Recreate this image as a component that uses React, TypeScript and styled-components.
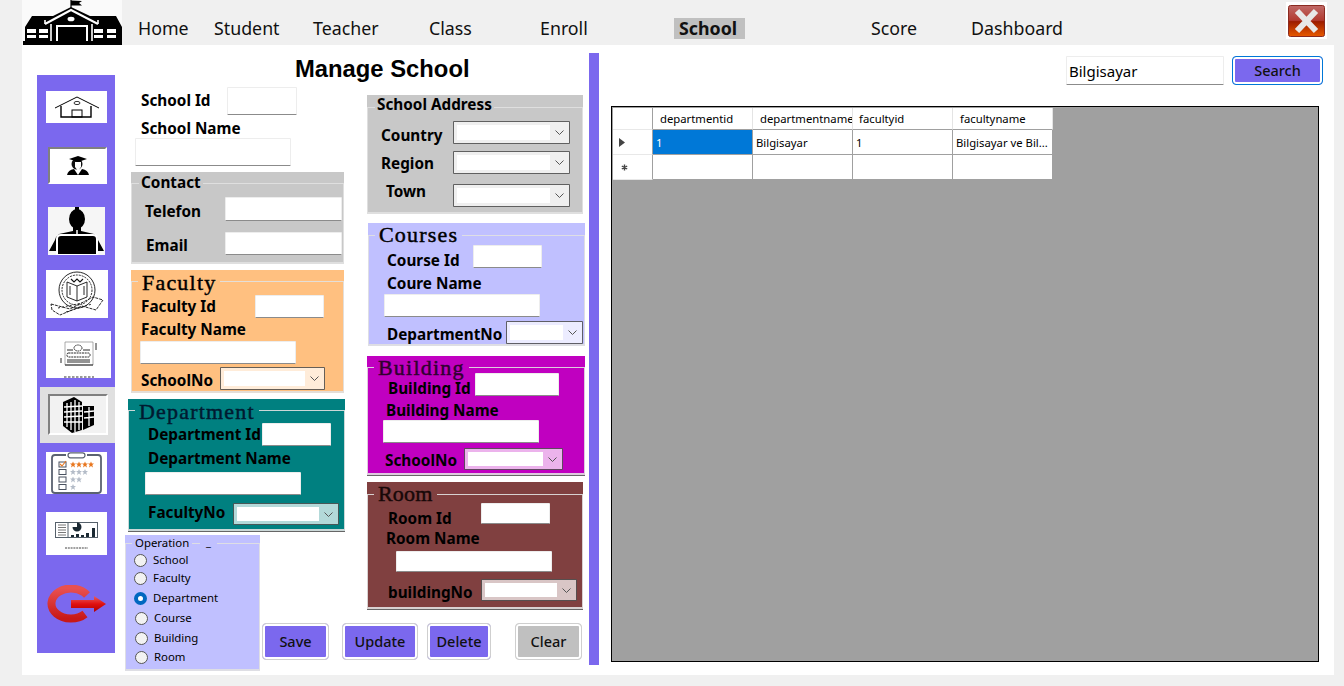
import React from "react";
import styled, { createGlobalStyle } from "styled-components";

const Global = createGlobalStyle`
  html, body { margin: 0; padding: 0; background: #f0f0f0; overflow: hidden; }
  body { font-family: "Noto Sans", "Open Sans", sans-serif; color: #000; }
  * { box-sizing: border-box; }
`;

const Page = styled.div`
  width: 1344px;
  height: 686px;
  display: flex;
  flex-direction: column;
`;

const TopBar = styled.header`
  height: 45px;
  display: flex;
  align-items: stretch;
  padding-left: 22px;
`;

const Logo = styled.div`
  width: 100px;
  height: 45px;
  background: #fafafa;
  margin-right: 16px;
  svg { display: block; }
`;

const Nav = styled.nav`
  display: flex;
  align-items: center;
  padding-top: 11px;
`;

const NavItem = styled.div<{ $w: number }>`
  width: ${(p) => p.$w}px;
  font-size: 17.8px;
  line-height: 22px;
  color: #111;
  white-space: nowrap;
`;

const NavActive = styled.span`
  display: inline-block;
  width: 71px;
  height: 21px;
  line-height: 21px;
  padding-left: 5px;
  background: #c0c0c0;
  font-weight: 700;
`;

const CloseButton = styled.button`
  margin: 2px 17px 0 auto;
  width: 41px;
  height: 37px;
  padding: 3px 2px;
  border: 0;
  background: #fff;
  svg { display: block; }
`;

const Panel = styled.main`
  width: 1312px;
  height: 630px;
  margin-left: 22px;
  background: #fff;
  display: flex;
  align-items: flex-start;
  padding: 8px 0 0 15px;
`;

const Sidebar = styled.aside`
  width: 78px;
  height: 578px;
  margin: 22px 10px 0 0;
  background: #7b68ee;
  flex-shrink: 0;
`;

const Tile = styled.div<{ $w: number; $h: number; $mt: number; $ml: number; $inset?: boolean; $bg?: string }>`
  width: ${(p) => p.$w}px;
  height: ${(p) => p.$h}px;
  margin: ${(p) => p.$mt}px 0 0 ${(p) => p.$ml}px;
  background: ${(p) => p.$bg ?? "#fff"};
  ${(p) => p.$inset && "border: 2px solid; border-color: #808080 #fff #fff #808080;"}
  svg { display: block; width: 100%; height: 100%; }
`;

const ActiveSlot = styled.div`
  height: 56px;
  margin: 9px 0 0 3px;
  padding-top: 7px;
  background: #e0e0e0;
`;

const FormGrid = styled.section`
  width: 464px;
  height: 618px;
  flex-shrink: 0;
  display: grid;
  grid-template-columns: 135px 85px 244px;
  grid-template-rows: 34px 448px 88px 48px;
  grid-template-areas:
    "title title title"
    "left left right"
    "op . right"
    "op act act";
`;

const Title = styled.h1`
  grid-area: title;
  margin: 0;
  padding-left: 170px;
  font: 700 23.8px/32px "Liberation Sans", Arial, sans-serif;
  white-space: nowrap;
`;

const LeftStack = styled.div`
  grid-area: left;
`;

const RightStack = styled.div`
  grid-area: right;
  padding: 8px 0 0 22px;
`;

const Row = styled.div<{ $h?: number; $mt?: number; $pl?: number }>`
  display: flex;
  align-items: center;
  height: ${(p) => p.$h ?? 23}px;
  margin-top: ${(p) => p.$mt ?? 0}px;
  padding-left: ${(p) => p.$pl ?? 0}px;
`;

const Label = styled.label<{ $w?: number; $dy?: number }>`
  ${(p) => p.$w && `width: ${p.$w}px;`}
  flex-shrink: 0;
  font-size: 15.3px;
  line-height: 20px;
  font-weight: 700;
  white-space: nowrap;
  color: #000;
  position: relative;
  top: ${(p) => p.$dy ?? 0}px;
`;

const Field = styled.input<{ $w: number }>`
  width: ${(p) => p.$w}px;
  height: 100%;
  flex-shrink: 0;
  padding: 0 2px;
  background: #fff;
  border: 1px solid rgba(0, 0, 0, 0.07);
  border-bottom-color: rgba(0, 0, 0, 0.45);
  border-radius: 1px;
  font: 15px "Noto Sans", sans-serif;
  outline: none;
`;

const Combo = styled.div<{ $w: number }>`
  width: ${(p) => p.$w}px;
  height: 100%;
  flex-shrink: 0;
  display: flex;
  align-items: stretch;
  padding: 3px 0 3px 3px;
  background: rgba(255, 255, 255, 0.7);
  border: 1px solid rgba(0, 0, 0, 0.6);
  border-radius: 1px;
`;

const ComboText = styled.div`
  flex: 1;
  background: #fff;
`;

const ComboArrow = styled.div`
  width: 19px;
  display: flex;
  align-items: center;
  justify-content: center;
`;

const Group = styled.div<{ $w: number; $h: number; $mt?: number; $ml?: number; $bg: string; $under?: boolean }>`
  width: ${(p) => p.$w}px;
  height: ${(p) => p.$h}px;
  margin: ${(p) => p.$mt ?? 0}px 0 0 ${(p) => p.$ml ?? 0}px;
  background: ${(p) => p.$bg};
  ${(p) => p.$under && "box-shadow: 0 1px 0 #666;"}
`;

const Frame = styled.fieldset`
  height: 100%;
  min-width: 0;
  margin: 0;
  padding: 0;
  border: 1px solid rgba(225, 225, 225, 0.9);
  border-bottom-width: 2px;
`;

const BoldLegend = styled.legend<{ $lh?: number; $dy: number }>`
  margin-left: 7px;
  padding: 0 2px;
  font-size: 15.3px;
  font-weight: 700;
  line-height: ${(p) => p.$lh ?? 22}px;
  position: relative;
  top: ${(p) => p.$dy}px;
`;

const SerifLegend = styled.legend<{ $lh?: number; $ink?: string; $dy?: number; $ls?: number }>`
  margin-left: 6px;
  padding: 0 4px;
  font: 400 22px "Liberation Serif", "Times New Roman", serif;
  line-height: ${(p) => p.$lh ?? 22}px;
  letter-spacing: ${(p) => p.$ls ?? 1.2}px;
  color: ${(p) => p.$ink ?? "#000"};
  -webkit-text-stroke: 0.45px currentColor;
  position: relative;
  top: ${(p) => p.$dy ?? 0}px;
`;

const OperationBox = styled(Group)`
  grid-area: op;
  position: relative;
`;

const OpLegend = styled.legend`
  margin-left: 6px;
  padding: 0 3px;
  font-size: 11.4px;
  line-height: 16px;
`;

const OpMark = styled.span`
  position: absolute;
  left: 75px;
  top: 0;
  width: 17px;
  height: 16px;
  background: #c0c0ff;
  font-size: 11px;
  line-height: 13px;
  text-align: center;
`;

const RadioRow = styled.label<{ $mt: number; $pl: number }>`
  display: flex;
  align-items: center;
  height: 16px;
  margin-top: ${(p) => p.$mt}px;
  padding-left: ${(p) => p.$pl}px;
  font-size: 11.4px;
  line-height: 16px;
`;

const Radio = styled.input`
  appearance: none;
  width: 13px;
  height: 13px;
  margin: 0 6px 0 0;
  border: 1px solid #555;
  border-radius: 50%;
  background: #f2f2f2;
  &:checked {
    border: 4px solid #0067c0;
    background: #fff;
  }
`;

const Actions = styled.div`
  grid-area: act;
  display: flex;
  align-items: flex-start;
  padding-left: 2px;
`;

const Action = styled.button<{ $w: number; $ml?: number; $bg?: string }>`
  width: ${(p) => p.$w}px;
  height: 37px;
  margin-left: ${(p) => p.$ml ?? 0}px;
  padding: 0 0 2px;
  border: 1px solid #cfcfcf;
  border-radius: 4px;
  box-shadow: inset 0 0 0 2px #fff;
  background: ${(p) => p.$bg ?? "#7b68ee"};
  font: 500 14.5px "Noto Sans", sans-serif;
  color: #111;
`;

const Divider = styled.div`
  width: 10px;
  height: 612px;
  flex-shrink: 0;
  background: #7b68ee;
`;

const RightPane = styled.section`
  width: 735px;
  padding-left: 12px;
`;

const SearchRow = styled.div`
  display: flex;
  justify-content: flex-end;
  height: 29px;
  margin-top: 3px;
  padding-right: 11px;
`;

const SearchInput = styled(Field)`
  height: 29px;
  margin-right: 8px;
  padding: 0 2px;
  font-size: 15px;
`;

const SearchButton = styled.button`
  width: 91px;
  height: 29px;
  padding: 0 0 2px;
  border: 1px solid #0078d7;
  border-radius: 4px;
  box-shadow: inset 0 0 0 2px #fff;
  background: #7b68ee;
  font: 500 14.5px "Noto Sans", sans-serif;
  color: #111;
`;

const DataArea = styled.div`
  width: 708px;
  height: 556px;
  margin-top: 21px;
  padding: 1px;
  background: #a0a0a0;
  border: 1px solid #000;
`;

const Table = styled.table`
  width: 440px;
  table-layout: fixed;
  border-collapse: separate;
  border-spacing: 0;
  font-size: 11.3px;
  line-height: 16px;
`;

const Corner = styled.th`
  width: 40px;
  height: 22px;
  padding: 0;
  background: #fff;
  border-right: 1px solid #a0a0a0;
  border-bottom: 1px solid #e8e8e8;
`;

const Head = styled.th<{ $pl: number }>`
  height: 22px;
  padding: 1px 0 0 ${(p) => p.$pl}px;
  background: #fff;
  border-right: 1px solid #e4e4e4;
  border-bottom: 1px solid #a0a0a0;
  font-weight: 400;
  text-align: left;
  white-space: nowrap;
  overflow: hidden;
`;

const RowHead = styled.th`
  height: 25px;
  padding: 0;
  background: #fff;
  border-right: 1px solid #a0a0a0;
  border-bottom: 1px solid #e8e8e8;
  font-weight: 400;
  svg { display: block; margin-left: 6px; }
`;

const Cell = styled.td<{ $sel?: boolean }>`
  height: 25px;
  padding: 1px 0 0 3px;
  background: ${(p) => (p.$sel ? "#0078d7" : "#fff")};
  color: ${(p) => (p.$sel ? "#fff" : "#000")};
  border-right: 1px solid #a0a0a0;
  border-bottom: 1px solid #a0a0a0;
  white-space: nowrap;
  overflow: hidden;
`;

const Chevron = () => (
  <svg width="9" height="5" viewBox="0 0 9 5">
    <path d="M0.5 0.5 L4.5 4.5 L8.5 0.5" fill="none" stroke="#555" strokeWidth="1" />
  </svg>
);

const Select = ({ w }: { w: number }) => (
  <Combo $w={w}>
    <ComboText />
    <ComboArrow>
      <Chevron />
    </ComboArrow>
  </Combo>
);

const SchoolLogo = () => (
  <svg width="100" height="45" viewBox="0 0 100 45">
    <path d="M49 0V9" stroke="#000" strokeWidth="1.2" />
    <path d="M49 0.5L60 1L57 3L60 5.5H49Z" fill="#000" />
    <path d="M1 45V41H3V27L10 16H31L49 7L68 16H94L100 27V41V45Z" fill="#000" />
    <path d="M23 24L49 10L76 24" fill="none" stroke="#fff" strokeWidth="2" />
    <path d="M23 24V20M76 24V20" stroke="#fff" strokeWidth="1.6" />
    <ellipse cx="49" cy="19" rx="3.5" ry="2.3" fill="#fff" />
    <path d="M35 41V26H65V41" fill="none" stroke="#fff" strokeWidth="2" />
    <path d="M29 41V24M70 41V24" stroke="#fff" strokeWidth="1.6" />
    <g fill="#fff">
      <rect x="5" y="29" width="9" height="4" />
      <rect x="17" y="29" width="9" height="4" />
      <rect x="5" y="35" width="9" height="3" />
      <rect x="17" y="35" width="9" height="3" />
      <rect x="72" y="29" width="9" height="4" />
      <rect x="85" y="29" width="9" height="4" />
      <rect x="72" y="35" width="9" height="3" />
      <rect x="85" y="35" width="9" height="3" />
    </g>
  </svg>
);

const CloseIcon = () => (
  <svg width="37" height="32" viewBox="0 0 37 32">
    <defs>
      <linearGradient id="closeFill" x1="0" y1="0" x2="0" y2="1">
        <stop offset="0" stopColor="#c06a68" />
        <stop offset="0.48" stopColor="#b23a30" />
        <stop offset="0.52" stopColor="#9c1c00" />
        <stop offset="1" stopColor="#e85a00" />
      </linearGradient>
    </defs>
    <rect x="0.5" y="0.5" width="36" height="31" rx="2" fill="url(#closeFill)" stroke="#8a2a20" />
    <path d="M9 6L28 26M28 6L9 26" stroke="#e8e8e8" strokeWidth="6" />
  </svg>
);

const HouseIcon = () => (
  <svg viewBox="0 0 61 32">
    <g fill="none" stroke="#000">
      <path d="M9 17L31 6L53 17" strokeWidth="1" />
      <path d="M15 15V26H45V15" strokeWidth="1.4" />
      <rect x="26" y="19" width="10" height="7" strokeWidth="1" />
      <ellipse cx="31" cy="12" rx="3" ry="1.6" strokeWidth="0.8" />
    </g>
  </svg>
);

const GraduateIcon = () => (
  <svg viewBox="0 0 55 33">
    <path d="M17 26Q18 21 24 20L28 26L32 20Q38 21 39 26Z" fill="#000" />
    <circle cx="27" cy="15" r="5.5" fill="#111" />
    <path d="M25 13H31V18L28 22L25 18Z" fill="#fff" />
    <path d="M19 10L28 7L37 10L28 13Z" fill="#000" />
  </svg>
);

const PersonIcon = () => (
  <svg viewBox="0 0 57 48">
    <ellipse cx="29" cy="12" rx="8" ry="10" fill="#000" />
    <path d="M27 0H31V4H27Z" fill="#000" />
    <path d="M25 19H33V24L46 27Q49 29 50 33L56 44H1L7 33Q8 29 11 27L25 24Z" fill="#000" />
    <path d="M9 48V32Q9 28 13 28H45Q49 28 49 32V48Z" fill="#000" stroke="#fff" strokeWidth="2" />
    <path d="M29 23V28" stroke="#fff" strokeWidth="1.5" />
  </svg>
);

const EmblemIcon = () => (
  <svg viewBox="0 0 62 48">
    <g fill="none" stroke="#111" strokeWidth="0.9">
      <circle cx="31" cy="20" r="18" />
      <circle cx="31" cy="20" r="15" strokeDasharray="2 1" />
      <path d="M21 12L31 16L41 12V27L31 31L21 27Z" />
      <path d="M31 16V31M24 16V25M38 16V25" />
      <path d="M25 9L28 12L31 9L34 12L37 9" strokeWidth="1.1" />
      <path d="M5 34L24 39L47 27L57 30L50 40L36 36L14 45L6 40Z" strokeDasharray="3 1" />
      <path d="M12 38L36 33M20 42L46 34" strokeDasharray="2 2" />
    </g>
  </svg>
);

const CertificateIcon = () => (
  <svg viewBox="0 0 65 47">
    <g fill="none" stroke="#111" strokeWidth="0.9">
      <path d="M19 34V11H47V34Z" strokeWidth="0.7" stroke="#888" />
      <ellipse cx="32" cy="17" rx="4" ry="3" strokeDasharray="1.5 0.7" />
      <rect x="21" y="22" width="23" height="4" rx="1.5" strokeDasharray="2 0.7" />
      <path d="M21 19H27M37 19H44M21 29H44M21 31H44M19 34H47" />
      <path d="M50 12V19M15 27V32" />
    </g>
    <path d="M18 46H48" stroke="#333" strokeWidth="1.2" strokeDasharray="2.5 1.5" />
  </svg>
);

const BuildingIcon = () => (
  <svg viewBox="0 0 56 37">
    <path d="M13 6L24 1L32 6V34L22 37L13 30Z" fill="#000" />
    <path d="M33 10L44 10V29L33 34Z" fill="#000" />
    <g stroke="#fff" strokeWidth="1.3" fill="none">
      <path d="M14 11L32 10M14 16L32 15M14 21L32 20M14 26L32 26" />
      <path d="M17 7V31M21 6V34M25 4V36M29 6V34" />
      <path d="M34 16L44 15M34 22L44 21M39 11V30" />
    </g>
  </svg>
);

const Star = ({ x, y, c }: { x: number; y: number; c: string }) => (
  <polygon
    fill={c}
    points={`${x},${y - 3} ${x + 0.9},${y - 0.9} ${x + 3},${y - 0.9} ${x + 1.3},${y + 0.6} ${x + 2},${y + 3} ${x},${y + 1.6} ${x - 2},${y + 3} ${x - 1.3},${y + 0.6} ${x - 3},${y - 0.9} ${x - 0.9},${y - 0.9}`}
  />
);

const ScoreIcon = () => (
  <svg viewBox="0 0 61 42">
    <path d="M20 3H9Q6 3 6 6V38Q6 41 9 41H52Q55 41 55 38V6Q55 3 52 3H41" fill="none" stroke="#5a6270" strokeWidth="1.8" />
    <rect x="22" y="0.8" width="17" height="5" rx="2.5" fill="#fff" stroke="#5a6270" strokeWidth="1.2" />
    <g fill="none" stroke="#4a5260" strokeWidth="1">
      <rect x="13" y="10" width="7" height="5" />
      <rect x="13" y="17.5" width="7" height="5" />
      <rect x="13" y="25" width="7" height="5" />
      <rect x="13" y="32.5" width="7" height="5" />
    </g>
    <path d="M14 12L16 14L20 9" fill="none" stroke="#e8761e" strokeWidth="1.1" />
    {[27, 33, 39, 45].map((x) => <Star key={x} x={x} y={12.5} c="#e8761e" />)}
    {[27, 33, 39].map((x) => <Star key={x} x={x} y={20} c="#b4bcc8" />)}
    {[27, 33].map((x) => <Star key={x} x={x} y={27.5} c="#b4bcc8" />)}
    <Star x={27} y={35} c="#b4bcc8" />
  </svg>
);

const DashboardIcon = () => (
  <svg viewBox="0 0 61 43">
    <rect x="9.5" y="10.5" width="42" height="15" fill="none" stroke="#55606a" strokeWidth="1" />
    <path d="M22 10V26" stroke="#55606a" strokeWidth="1" />
    <path d="M12 13H20M12 15.5H20M12 18H20M12 20.5H20M12 23H20" stroke="#777" strokeWidth="1" />
    <path d="M31 15V10.5A4.5 4.5 0 1 1 26.5 15Z" fill="#1c2a33" />
    <path d="M25 23h3v2h-3zM30 22h3v3h-3zM35 23h3v2h-3zM40 21h3v4h-3zM46 16h3v9h-3z" fill="#1c2a33" />
    <path d="M19 36H42" stroke="#444" strokeWidth="1.2" strokeDasharray="2 0.8" />
  </svg>
);

const ExitIcon = () => (
  <svg viewBox="0 0 62 40">
    <defs>
      <linearGradient id="ringFill" x1="0" y1="0" x2="0" y2="1">
        <stop offset="0" stopColor="#e85050" />
        <stop offset="1" stopColor="#c81818" />
      </linearGradient>
      <linearGradient id="arrowFill" x1="0" y1="0" x2="0" y2="1">
        <stop offset="0" stopColor="#e86060" />
        <stop offset="0.5" stopColor="#e01010" />
        <stop offset="1" stopColor="#b00000" />
      </linearGradient>
    </defs>
    <path d="M42 10A19.5 15 0 1 0 40 29" fill="none" stroke="url(#ringFill)" strokeWidth="8" />
    <polygon points="26,15 49,15 49,11 61,19 49,27 49,23 26,23" fill="url(#arrowFill)" />
  </svg>
);

const ExitTile = styled(Tile)`
  background: transparent;
`;

export default function App() {
  return (
    <Page>
      <Global />
      <TopBar>
        <Logo>
          <SchoolLogo />
        </Logo>
        <Nav>
          <NavItem $w={76}>Home</NavItem>
          <NavItem $w={99}>Student</NavItem>
          <NavItem $w={116}>Teacher</NavItem>
          <NavItem $w={111}>Class</NavItem>
          <NavItem $w={134}>Enroll</NavItem>
          <NavItem $w={197}>
            <NavActive>School</NavActive>
          </NavItem>
          <NavItem $w={100}>Score</NavItem>
          <NavItem $w={100}>Dashboard</NavItem>
        </Nav>
        <CloseButton aria-label="Close">
          <CloseIcon />
        </CloseButton>
      </TopBar>

      <Panel>
        <Sidebar>
          <Tile $w={61} $h={32} $mt={16} $ml={9}><HouseIcon /></Tile>
          <Tile $w={59} $h={37} $mt={24} $ml={11} $inset><GraduateIcon /></Tile>
          <Tile $w={57} $h={48} $mt={23} $ml={11} $bg="#f6f6f6"><PersonIcon /></Tile>
          <Tile $w={62} $h={48} $mt={15} $ml={9}><EmblemIcon /></Tile>
          <Tile $w={65} $h={47} $mt={13} $ml={9}><CertificateIcon /></Tile>
          <ActiveSlot>
            <Tile $w={60} $h={41} $mt={0} $ml={8} $inset $bg="#f2f2f2"><BuildingIcon /></Tile>
          </ActiveSlot>
          <Tile $w={61} $h={42} $mt={9} $ml={9}><ScoreIcon /></Tile>
          <Tile $w={61} $h={43} $mt={18} $ml={9}><DashboardIcon /></Tile>
          <ExitTile $w={62} $h={40} $mt={30} $ml={8}><ExitIcon /></ExitTile>
        </Sidebar>

        <FormGrid>
          <Title>Manage School</Title>

          <LeftStack>
            <Row $h={28} $pl={16}>
              <Label $w={86} $dy={-1}>School Id</Label>
              <Field $w={70} readOnly />
            </Row>
            <Row $h={20} $mt={3} $pl={16}>
              <Label>School Name</Label>
            </Row>
            <Row $h={28} $pl={10}>
              <Field $w={156} readOnly />
            </Row>

            <Group $w={213} $h={92} $mt={6} $ml={6} $bg="#c8c8c8">
              <Frame>
                <BoldLegend $dy={-1}>Contact</BoldLegend>
                <Row $h={24} $mt={3} $pl={13}>
                  <Label $w={80} $dy={2}>Telefon</Label>
                  <Field $w={117} readOnly />
                </Row>
                <Row $h={23} $mt={11} $pl={14}>
                  <Label $w={79} $dy={1}>Email</Label>
                  <Field $w={117} readOnly />
                </Row>
              </Frame>
            </Group>

            <Group $w={213} $h={123} $mt={6} $ml={6} $bg="#ffc080">
              <Frame>
                <SerifLegend $dy={2}>Faculty</SerifLegend>
                <Row $mt={3} $pl={9}>
                  <Label $w={114} $dy={-1}>Faculty Id</Label>
                  <Field $w={69} readOnly />
                </Row>
                <Row $h={20} $mt={1} $pl={9}>
                  <Label>Faculty Name</Label>
                </Row>
                <Row $mt={2} $pl={8}>
                  <Field $w={156} readOnly />
                </Row>
                <Row $mt={3} $pl={9}>
                  <Label $w={79} $dy={1}>SchoolNo</Label>
                  <Select w={105} />
                </Row>
              </Frame>
            </Group>

            <Group $w={217} $h={132} $mt={6} $ml={3} $bg="#008080" $under>
              <Frame>
                <SerifLegend $ink="#001a30" $dy={2}>Department</SerifLegend>
                <Row $mt={2} $pl={19}>
                  <Label $w={114} $dy={-1}>Department Id</Label>
                  <Field $w={69} readOnly />
                </Row>
                <Row $h={20} $mt={2} $pl={19}>
                  <Label>Department Name</Label>
                </Row>
                <Row $mt={4} $pl={16}>
                  <Field $w={156} readOnly />
                </Row>
                <Row $h={22} $mt={8} $pl={19}>
                  <Label $w={85} $dy={-2}>FacultyNo</Label>
                  <Select w={106} />
                </Row>
              </Frame>
            </Group>
          </LeftStack>

          <RightStack>
            <Group $w={216} $h={119} $bg="#c8c8c8">
              <Frame>
                <BoldLegend $lh={24} $dy={-3}>School Address</BoldLegend>
                <Row $mt={2} $pl={13}>
                  <Label $w={72} $dy={2}>Country</Label>
                  <Select w={117} />
                </Row>
                <Row $mt={7} $pl={13}>
                  <Label $w={72}>Region</Label>
                  <Select w={117} />
                </Row>
                <Row $mt={10} $pl={18}>
                  <Label $w={67} $dy={-5}>Town</Label>
                  <Select w={117} />
                </Row>
              </Frame>
            </Group>

            <Group $w={217} $h={123} $mt={9} $ml={1} $bg="#c0c0ff">
              <Frame>
                <SerifLegend $lh={24}>Courses</SerifLegend>
                <Row $mt={-2} $pl={18}>
                  <Label $w={86} $dy={3}>Course Id</Label>
                  <Field $w={69} readOnly />
                </Row>
                <Row $h={20} $mt={5} $pl={18}>
                  <Label>Coure Name</Label>
                </Row>
                <Row $mt={1} $pl={15}>
                  <Field $w={156} readOnly />
                </Row>
                <Row $mt={4} $pl={18}>
                  <Label $w={119} $dy={1}>DepartmentNo</Label>
                  <Select w={77} />
                </Row>
              </Frame>
            </Group>

            <Group $w={218} $h={119} $mt={10} $bg="#c000c0" $under>
              <Frame>
                <SerifLegend $ink="#300030" $dy={1}>Building</SerifLegend>
                <Row $mt={-5} $pl={20}>
                  <Label $w={87} $dy={3}>Building Id</Label>
                  <Field $w={84} readOnly />
                </Row>
                <Row $h={20} $mt={4} $pl={18}>
                  <Label>Building Name</Label>
                </Row>
                <Row $pl={15}>
                  <Field $w={156} readOnly />
                </Row>
                <Row $h={22} $mt={5} $pl={17}>
                  <Label $w={79} $dy={1}>SchoolNo</Label>
                  <Select w={99} />
                </Row>
              </Frame>
            </Group>

            <Group $w={216} $h={127} $mt={7} $bg="#804040" $under>
              <Frame>
                <SerifLegend $lh={24} $ink="#180808" $ls={0.2}>Room</SerifLegend>
                <Row $h={21} $mt={-3} $pl={20}>
                  <Label $w={93} $dy={4}>Room Id</Label>
                  <Field $w={69} readOnly />
                </Row>
                <Row $h={20} $mt={4} $pl={18}>
                  <Label>Room Name</Label>
                </Row>
                <Row $h={21} $mt={3} $pl={28}>
                  <Field $w={156} readOnly />
                </Row>
                <Row $h={22} $mt={7} $pl={20}>
                  <Label $w={93} $dy={2}>buildingNo</Label>
                  <Select w={96} />
                </Row>
              </Frame>
            </Group>
          </RightStack>

          <OperationBox $w={135} $h={136} $bg="#c0c0ff">
            <Frame>
              <OpLegend>Operation</OpLegend>
              <OpMark>_</OpMark>
              <RadioRow $mt={1} $pl={8}><Radio type="radio" name="op" readOnly />School</RadioRow>
              <RadioRow $mt={2} $pl={8}><Radio type="radio" name="op" readOnly />Faculty</RadioRow>
              <RadioRow $mt={4} $pl={8}><Radio type="radio" name="op" defaultChecked />Department</RadioRow>
              <RadioRow $mt={4} $pl={9}><Radio type="radio" name="op" readOnly />Course</RadioRow>
              <RadioRow $mt={4} $pl={9}><Radio type="radio" name="op" readOnly />Building</RadioRow>
              <RadioRow $mt={3} $pl={9}><Radio type="radio" name="op" readOnly />Room</RadioRow>
            </Frame>
          </OperationBox>

          <Actions>
            <Action $w={67}>Save</Action>
            <Action $w={76} $ml={13}>Update</Action>
            <Action $w={64} $ml={9}>Delete</Action>
            <Action $w={67} $ml={24} $bg="#c0c0c0">Clear</Action>
          </Actions>
        </FormGrid>

        <Divider />

        <RightPane>
          <SearchRow>
            <SearchInput $w={158} defaultValue="Bilgisayar" readOnly />
            <SearchButton>Search</SearchButton>
          </SearchRow>
          <DataArea>
            <Table>
              <thead>
                <tr>
                  <Corner />
                  <Head $pl={7}>departmentid</Head>
                  <Head $pl={7}>departmentname</Head>
                  <Head $pl={6}>facultyid</Head>
                  <Head $pl={7}>facultyname</Head>
                </tr>
              </thead>
              <tbody>
                <tr>
                  <RowHead>
                    <svg width="7" height="9" viewBox="0 0 7 9"><path d="M0 0L6 4.5L0 9Z" fill="#444" /></svg>
                  </RowHead>
                  <Cell $sel>1</Cell>
                  <Cell>Bilgisayar</Cell>
                  <Cell>1</Cell>
                  <Cell>Bilgisayar ve Bil...</Cell>
                </tr>
                <tr>
                  <RowHead>
                    <svg width="7" height="7" viewBox="0 0 7 7" style={{ marginLeft: 8 }}><path d="M3.5 0.5V6.5M0.8 2L6.2 5M6.2 2L0.8 5" stroke="#444" strokeWidth="1.4" /></svg>
                  </RowHead>
                  <Cell />
                  <Cell />
                  <Cell />
                  <Cell />
                </tr>
              </tbody>
            </Table>
          </DataArea>
        </RightPane>
      </Panel>
    </Page>
  );
}
